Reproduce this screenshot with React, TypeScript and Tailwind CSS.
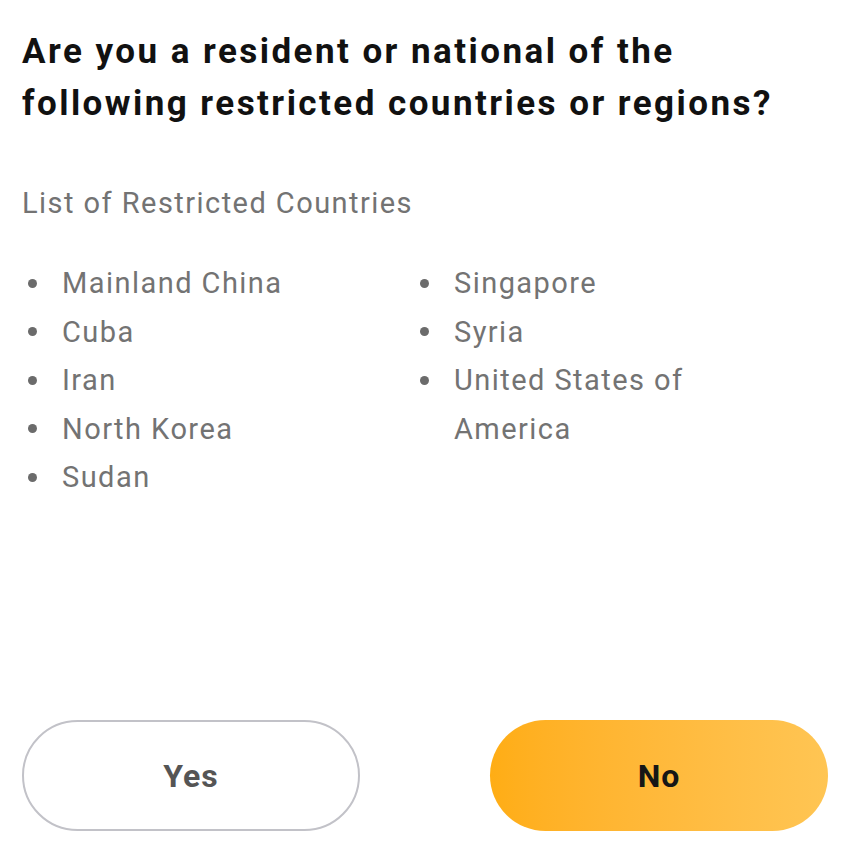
const leftList = ["Mainland China", "Cuba", "Iran", "North Korea", "Sudan"];
const rightList = ["Singapore", "Syria", "United States of America"];

function Item({ label }: { label: string }) {
  return (
    <li className="flex items-start">
      <span className="w-[40px] shrink-0 flex h-[48.5px] items-center pl-[6px]">
        <span className="block h-[9px] w-[9px] rounded-full bg-[#6b6b6b]" />
      </span>
      <span className="leading-[48.5px]">{label}</span>
    </li>
  );
}

export default function App() {
  return (
    <div
      className="flex h-[845px] w-[850px] flex-col bg-white px-[22px]"
      style={{ fontFamily: "Roboto, 'Noto Sans', sans-serif" }}
    >
      <h1 className="mt-[26px] text-[35px] font-bold leading-[52px] tracking-[0.07em] text-[#111111]">
        Are you a resident or national of the
        <br />
        following restricted countries or regions?
      </h1>

      <p className="mt-[53px] text-[29px] leading-[40px] tracking-[0.05em] text-[#737373]">
        List of Restricted Countries
      </p>

      <div className="mt-[36px] grid grid-cols-[392px_320px] text-[29px] tracking-[0.05em] text-[#737373]">
        <ul className="flex flex-col">
          {leftList.map((c) => (
            <Item key={c} label={c} />
          ))}
        </ul>
        <ul className="flex flex-col">
          {rightList.map((c) => (
            <Item key={c} label={c} />
          ))}
        </ul>
      </div>

      <div className="mt-auto mb-[14px] flex items-center justify-between">
        <button className="flex h-[111px] w-[338px] items-center justify-center rounded-full border-2 border-[#c2c2c8] bg-white text-[32px] font-bold tracking-[0.03em] text-[#555555]">
          Yes
        </button>
        <button className="flex h-[111px] w-[338px] items-center justify-center rounded-full bg-gradient-to-r from-[#ffad14] to-[#ffc553] text-[32px] font-bold tracking-[0.03em] text-[#161616]">
          No
        </button>
      </div>
    </div>
  );
}
